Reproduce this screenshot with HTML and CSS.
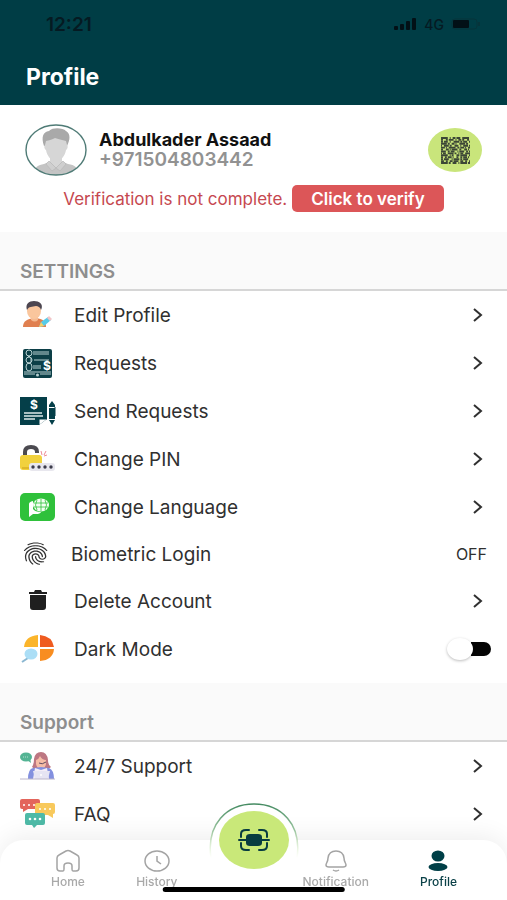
FILE: index.html
```html
<!DOCTYPE html>
<html lang="en">
<head>
<meta charset="utf-8">
<meta name="viewport" content="width=device-width, initial-scale=1">
<title>Profile</title>
<link rel="stylesheet" href="styles.css">
</head>
<body>
<header class="top">
  <div class="status">
    <span class="time">12:21</span>
    <div class="signals">
      <svg width="23" height="12" viewBox="0 0 23 12"><rect y="8" width="4" height="4" rx="1"/><rect x="6" y="6" width="4" height="6" rx="1"/><rect x="12" y="3" width="4" height="9" rx="1"/><rect x="18" width="4" height="12" rx="1"/></svg>
      <span class="network">4G</span>
      <svg width="30" height="12" viewBox="0 0 30 12"><rect x="1" y="1" width="25" height="10" rx="3" fill="none" stroke="#06343b"/><rect x="2" y="2" width="16" height="8" rx="1" /><path d="M28 4v4" stroke="#06343b" stroke-width="2"/></svg>
    </div>
  </div>
  <h1>Profile</h1>
</header>

<main>
  <section class="card">
    <div class="person">
      <svg class="avatar" viewBox="0 0 62 52" role="img" aria-label="Avatar">
        <defs><clipPath id="face"><ellipse cx="31" cy="26" rx="30" ry="25"/></clipPath></defs>
        <ellipse cx="31" cy="26" rx="30" ry="25" fill="#fff"/>
        <g clip-path="url(#face)">
          <path d="M8 52c1-9 5-11 11-12l7-3h10l7 3c7 1 11 4 12 12z" fill="#c4c4c4"/>
          <path d="M25 31v7l6 6 6-6v-7z" fill="#d6d6d6"/>
          <path d="M24 37l7 7-4 3-6-7zM38 37l-7 7 4 3 6-7z" fill="#cfcfcf" stroke="#b5b5b5" stroke-width=".6"/>
          <path d="M19 22C16 13 18 8 24 7c4-4 14-3 17 0 5 3 4 9 1 15z" fill="#a9a9a9"/>
          <path d="M21 17c5-1 7-2 9-3 3 1 7 2 11 3l1 4c1 0 1 4-1 5-1 6-5 11-10 11s-9-5-10-11c-2-1-2-5-1-5z" fill="#d6d6d6"/>
        </g>
        <ellipse cx="31" cy="26" rx="30" ry="25" fill="none" stroke="#4f7b76" stroke-width="1.4"/>
      </svg>
      <div class="identity">
        <h2>Abdulkader Assaad</h2>
        <p>+971504803442</p>
      </div>
      <button class="qr" type="button" aria-label="Show QR code">
        <svg width="31" height="27" viewBox="0 0 32 28" fill="none" stroke="#3c4636" stroke-width="2">
          <path d="M1 1h30" stroke-dasharray="7 2 1 2 3 1 4 2"/>
          <path d="M1 3h30" stroke-dasharray="2 3 2 1 5 2 1 2 3 1"/>
          <path d="M1 5h30" stroke-dasharray="2 1 4 2 1 3 6 1"/>
          <path d="M1 7h30" stroke-dasharray="6 1 2 2 3 1 1 3"/>
          <path d="M1 9h30" stroke-dasharray="1 2 5 1 2 3 4 2"/>
          <path d="M1 11h30" stroke-dasharray="4 1 1 2 7 2 2 1"/>
          <path d="M1 13h30" stroke-dasharray="2 3 3 1 1 1 6 2"/>
          <path d="M1 15h30" stroke-dasharray="5 2 2 1 4 3 1 1"/>
          <path d="M1 17h30" stroke-dasharray="1 1 3 2 6 1 2 2"/>
          <path d="M1 19h30" stroke-dasharray="7 2 1 1 2 3 3 1"/>
          <path d="M1 21h30" stroke-dasharray="2 2 2 1 4 1 1 3"/>
          <path d="M1 23h30" stroke-dasharray="2 1 5 3 1 1 6 1"/>
          <path d="M1 25h30" stroke-dasharray="3 2 2 2 3 1 5 2"/>
          <path d="M1 27h30" stroke-dasharray="7 1 2 2 4 2 1 1"/>
        </svg>
      </button>
    </div>
    <div class="verify">
      <p>Verification is not complete.</p>
      <button type="button">Click to verify</button>
    </div>
  </section>

  <h2 class="band">SETTINGS</h2>
  <ul class="list">
    <li><a class="row" href="#edit">
      <svg class="icon" viewBox="0 0 36 32"><path d="M3 28c0-6 4-8 11-9h2c7 1 10 3 10 9z" fill="#e08050"/><path d="M11 17h7v4q-3 3-7 0z" fill="#f5ba91"/><ellipse cx="14" cy="12" rx="7" ry="8" fill="#fac69d"/><path d="M7 11C5 5 9 2 14 2s10 3 7 9c-1-3-3-4-5-4-4 1-7 0-9 4z" fill="#4c4650"/><path d="M19 28l2-5 7-5 3 3-7 6z" fill="#56cbe8"/><path d="M19 28l2-5 3 4z" fill="#f8cf68"/><path d="M27 19l2-2 3 3-2 2z" fill="#f2c5c8"/></svg>
      <span class="name">Edit Profile</span><svg class="chevron" viewBox="0 0 12 16"><path d="M2 2l7 6-7 6"/></svg></a></li>
    <li><a class="row" href="#requests">
      <svg class="icon" viewBox="0 0 36 32"><rect x="3" y="2" width="29" height="29" rx="2" fill="#0c3f47"/><g fill="none" stroke="#b8d1d2"><circle cx="9" cy="6" r="3"/><circle cx="9" cy="13" r="3"/><ellipse cx="9" cy="20" rx="3" ry="4"/><path d="M13 5h16M13 7h16M14 13h15M13 19h8M13 21h8M4 25h27M4 27h11M20 27h11"/><path d="M7 11l2-2 2 2v4l-2 2-2-2"/></g><circle cx="17.500" cy="28" r="1.500" fill="#b8d1d2"/><text class="coin" x="23" y="23">$</text></svg>
      <span class="name">Requests</span><svg class="chevron" viewBox="0 0 12 16"><path d="M2 2l7 6-7 6"/></svg></a></li>
    <li><a class="row" href="#send">
      <svg class="icon" viewBox="0 0 36 32"><path d="M0 2h27v22l-8 6H0z" fill="#053f49"/><path d="M19 30v-6h8" fill="#fff" stroke="#053f49"/><path d="M4 18h18M4 21h19M4 24h11" stroke="#dce9e9" stroke-width="1.400"/><text class="coin" x="10" y="14">$</text><path d="M32 6l3 4v2h-6v-2zM29 13h6v11h-6zM29 25h6l-3 5z" fill="#053f49"/><path d="M35 12v9" stroke="#053f49"/></svg>
      <span class="name">Send Requests</span><svg class="chevron" viewBox="0 0 12 16"><path d="M2 2l7 6-7 6"/></svg></a></li>
    <li><a class="row" href="#pin">
      <svg class="icon" viewBox="0 0 36 32"><path d="M5 15V9q0-5 6-5t6 5v1" fill="none" stroke="#4b4a50" stroke-width="4"/><rect x="0" y="12" width="22" height="15" rx="3" fill="#f1d13d"/><path d="M2 25h18" stroke="#dfb729" stroke-width="2"/><rect x="9" y="20" width="26" height="8" rx="3" fill="#e8e7ee"/><g fill="#3d3c4b"><circle cx="13" cy="24" r="1.700"/><circle cx="19" cy="24" r="1.700"/><circle cx="25" cy="24" r="1.700"/><circle cx="31" cy="24" r="1.700"/></g><path d="M21 8l1 4M26 8l-2 4M27 12l-3 1" stroke="#ed8b94"/></svg>
      <span class="name">Change PIN</span><svg class="chevron" viewBox="0 0 12 16"><path d="M2 2l7 6-7 6"/></svg></a></li>
    <li><a class="row" href="#language">
      <svg class="icon" viewBox="0 0 36 32"><rect y="2" width="35" height="28" rx="5" fill="#2fc13b"/><path d="M9 13q0-2 4-3v8q2 3 8 3-1 2-5 2h-3l-4 3z" fill="#fff"/><ellipse cx="21" cy="14" rx="8" ry="6.500" fill="#f3fff2"/><path d="M21 8v12M14 12h14M14 16h14M17 9q-3 5 0 10M25 9q3 5 0 10M25 20l2 2" fill="none" stroke="#2fc13b" stroke-width=".8"/></svg>
      <span class="name">Change Language</span><svg class="chevron" viewBox="0 0 12 16"><path d="M2 2l7 6-7 6"/></svg></a></li>
    <li><button class="row biometric" type="button">
      <svg class="icon" viewBox="0 0 29 24" fill="#333"><path transform="scale(1.050 .9) translate(0 1)" d="M17.810 4.470c-.08 0-.16-.02-.23-.06C15.660 3.420 14 3 12.010 3c-1.980 0-3.860.47-5.570 1.410-.24.130-.54.040-.68-.2-.13-.24-.04-.55.2-.68C7.820 2.520 9.860 2 12.010 2c2.130 0 3.990.47 6.030 1.520.25.130.34.430.21.670-.09.180-.26.280-.44.280zM3.500 9.720c-.1 0-.2-.03-.29-.09-.23-.16-.28-.47-.12-.7.990-1.400 2.250-2.500 3.750-3.270C9.980 4.040 14 4.030 17.150 5.650c1.500.77 2.760 1.860 3.750 3.250.16.220.11.540-.12.700-.23.160-.54.110-.7-.12-.9-1.260-2.040-2.250-3.390-2.940-2.870-1.470-6.540-1.470-9.400.01-1.360.7-2.500 1.700-3.400 2.960-.08.140-.23.210-.39.210zm6.250 12.070c-.13 0-.26-.05-.35-.15-.87-.87-1.340-1.430-2.010-2.640-.69-1.230-1.050-2.730-1.050-4.340 0-2.970 2.540-5.390 5.660-5.390s5.660 2.420 5.660 5.390c0 .28-.22.5-.5.5s-.5-.22-.5-.5c0-2.420-2.090-4.390-4.660-4.390-2.570 0-4.660 1.970-4.660 4.390 0 1.440.32 2.770.93 3.850.64 1.150 1.080 1.640 1.850 2.420.19.200.19.510 0 .71-.11.100-.24.150-.37.150zm7.170-1.850c-1.190 0-2.240-.3-3.100-.89-1.490-1.010-2.380-2.650-2.380-4.390 0-.28.22-.5.5-.5s.5.220.5.500c0 1.410.72 2.740 1.940 3.560.71.480 1.540.71 2.540.71.240 0 .64-.03 1.040-.1.270-.05.53.130.58.410.05.270-.13.530-.41.580-.57.110-1.070.12-1.210.12zM14.910 22c-.04 0-.09-.01-.13-.02-1.590-.44-2.630-1.030-3.720-2.100-1.400-1.390-2.170-3.240-2.170-5.220 0-1.620 1.380-2.940 3.080-2.940s3.080 1.320 3.080 2.940c0 1.070.93 1.940 2.080 1.940s2.080-.87 2.080-1.940c0-3.770-3.250-6.830-7.250-6.830-2.840 0-5.440 1.580-6.610 4.030-.39.810-.59 1.760-.59 2.800 0 .78.070 2.010.67 3.610.1.260-.03.550-.29.640-.26.100-.55-.04-.64-.29-.49-1.310-.73-2.610-.73-3.960 0-1.200.23-2.290.68-3.240 1.330-2.790 4.280-4.600 7.510-4.600 4.550 0 8.250 3.510 8.250 7.830 0 1.620-1.380 2.940-3.080 2.940s-3.080-1.320-3.080-2.940c0-1.070-.93-1.940-2.080-1.940s-2.080.87-2.080 1.940c0 1.710.66 3.310 1.870 4.510.95.940 1.860 1.460 3.270 1.850.27.070.42.350.35.610-.05.230-.26.380-.47.380z"/></svg>
      <span class="name">Biometric Login</span><span class="state">OFF</span></button></li>
    <li><a class="row" href="#delete">
      <svg class="icon" viewBox="0 0 36 32" fill="#1f1f1f"><path d="M9 7h5l1-2h6l1 2h5v2H9zM10 10h16v12q0 3-3 3H13q-3 0-3-3z"/></svg>
      <span class="name">Delete Account</span><svg class="chevron" viewBox="0 0 12 16"><path d="M2 2l7 6-7 6"/></svg></a></li>
    <li><label class="row">
      <svg class="icon" viewBox="0 0 36 32"><path d="M18 2v12H4Q5 3 18 2z" fill="#fbb52b"/><path d="M20 2q12 1 14 12H20z" fill="#ef5b20"/><path d="M20 16h14q-1 11-14 12z" fill="#f88d20"/><path d="M8 25l-6 4" stroke="#8bb7d1" stroke-width="2"/><ellipse cx="11" cy="21" rx="6.500" ry="5.500" fill="#abdef6"/></svg>
      <span class="name">Dark Mode</span><input class="switch" type="checkbox" role="switch"></label></li>
  </ul>

  <h2 class="band">Support</h2>
  <ul class="list">
    <li><a class="row" href="#support">
      <svg class="icon" viewBox="0 0 36 32"><ellipse cx="6" cy="7" rx="6" ry="4.500" fill="#54b494"/><path d="M7 10l4 3-1-5z" fill="#54b494"/><path d="M3 7h6" stroke="#b7dfcf" stroke-dasharray="1 1"/><path d="M12 17q2-3 2-8 1-7 7-7t7 8q0 5 3 7l-4 3H16z" fill="#bd7782"/><path d="M16 10q3-1 4-4 2 4 6 4v4q-1 5-5 5t-5-5z" fill="#f6bda6"/><path d="M19 13q3 2 7-1" fill="none" stroke="#614b60"/><path d="M8 29q0-10 5-11l8-1 8 1q5 2 5 11z" fill="#8390df"/><path d="M15 18l6 2 6-2 2 11H13z" fill="#f4eef8"/><path d="M13 21h17l-2 8H15z" fill="#e6e4f3"/><circle cx="21" cy="25" r="1" fill="#fff"/><path d="M0 29h35" stroke="#bcb6ca"/></svg>
      <span class="name">24/7 Support</span><svg class="chevron" viewBox="0 0 12 16"><path d="M2 2l7 6-7 6"/></svg></a></li>
    <li><a class="row" href="#faq">
      <svg class="icon" viewBox="0 0 36 32"><path d="M2 1h16q2 0 2 2v8H8l-5 3v-3H2q-2 0-2-2V3q0-2 2-2z" fill="#e3655b"/><path d="M17 5h16q2 0 2 2v7q0 2-2 2v4l-5-3H15V7q0-2 2-2z" fill="#f8c95c"/><path d="M7 15h16q2 0 2 2v8q0 2-2 2h-6l-3 3-2-3H7q-2 0-2-2v-8q0-2 2-2z" fill="#4ebaa7"/><g fill="#fff"><circle cx="4" cy="7" r="1"/><circle cx="9" cy="7" r="1"/><circle cx="14" cy="7" r="1"/><circle cx="20" cy="11" r="1"/><circle cx="25" cy="11" r="1"/><circle cx="30" cy="11" r="1"/><circle cx="10" cy="21" r="1.300"/><circle cx="15" cy="21" r="1.300"/><circle cx="20" cy="21" r="1.300"/></g></svg>
      <span class="name">FAQ</span><svg class="chevron" viewBox="0 0 12 16"><path d="M2 2l7 6-7 6"/></svg></a></li>
  </ul>
</main>

<nav class="tabs" aria-label="Main">
  <div class="side left">
    <a href="#home"><svg viewBox="0 0 26 24"><path d="M2 9Q2 7 4 6l7-4q2-1 4 0l7 4q2 1 2 3v10q0 3-3 3h-3q-1 0-1-2v-3q0-3-4-3t-4 3v3q0 2-1 2H5q-3 0-3-3z"/></svg><span>Home</span></a>
    <a href="#history"><svg viewBox="0 0 26 24"><ellipse cx="13" cy="12" rx="12" ry="10"/><path d="M13 7v5l4 3"/></svg><span>History</span></a>
  </div>
  <button class="scan" type="button" aria-label="Scan">
    <svg width="32" height="24" viewBox="0 0 32 24" fill="none" stroke="#083c40" stroke-width="2" stroke-linecap="round"><path d="M3 9V6q0-4 5-4h3M21 2h3q5 0 5 4v3M3 15v3q0 4 5 4h3M21 22h3q5 0 5-4v-3"/><path d="M9 10V9q0-2 3-2h8q3 0 3 2v1zM9 14v1q0 2 3 2h8q3 0 3-2v-1z" fill="#083c40"/><path d="M1 12h30"/></svg>
  </button>
  <svg class="ring" viewBox="0 0 90 64" fill="none" aria-hidden="true"><defs><linearGradient id="fade" x1="0" y1="0" x2="0" y2="1"><stop offset="0" stop-color="#458b62"/><stop offset=".5" stop-color="#9bc5a0"/><stop offset="1" stop-color="#d7f1b5" stop-opacity="0"/></linearGradient></defs><path d="M2 56C-3 22 18 2 45 2s48 20 43 54" stroke="url(#fade)" stroke-width="1.500"/></svg>
  <div class="side right">
    <a href="#notification"><svg viewBox="0 0 26 24"><path d="M5 9q1-7 8-7t8 7c0 4 2 5 2 7q0 2-3 2H6q-3 0-3-2c0-2 2-3 2-7zM10 21q3 2 6 0"/></svg><span>Notification</span></a>
    <a class="current" href="#profile" aria-current="page"><svg viewBox="0 0 26 24"><ellipse cx="13" cy="7" rx="6.500" ry="5.500"/><ellipse cx="13" cy="18" rx="9.500" ry="4"/></svg><span>Profile</span></a>
  </div>
  <div class="indicator"></div>
</nav>
</body>
</html>
```
FILE: styles.css
```css
* {
  box-sizing: border-box;
}

body,
h1,
h2,
p,
ul {
  margin: 0;
}

body {
  background: #fff;
  color: #303030;
  font-family: Inter, "Liberation Sans", sans-serif;
}

button {
  border: 0;
  font-family: inherit;
}

.top {
  background: #003d45;
  padding: 12px 26px 14px;
}

.status {
  display: flex;
  align-items: center;
  justify-content: space-between;
  height: 24px;
  padding-left: 20px;
  color: #051a22;
}

.time {
  font-size: 19px;
  font-weight: 600;
}

.signals {
  display: flex;
  align-items: center;
  gap: 7px;
  fill: #021016;
}

.network {
  font-size: 14px;
  font-weight: 500;
}

.top h1 {
  margin-top: 27px;
  color: #fff;
  font-size: 23px;
  font-weight: 700;
  line-height: 28px;
}

.card {
  height: 127px;
  padding: 19px 25px 0;
}

.person {
  display: flex;
  align-items: center;
}

.avatar {
  width: 62px;
  height: 52px;
  flex: none;
}

.identity {
  flex: 1;
  padding-left: 12px;
}

.identity h2 {
  color: #111;
  font-size: 18px;
  font-weight: 700;
  line-height: 20px;
}

.identity p {
  color: #929292;
  font-size: 19px;
  font-weight: 600;
  line-height: 20px;
}

.qr {
  display: grid;
  place-items: center;
  width: 54px;
  height: 44px;
  padding: 0;
  border-radius: 50%;
  background: #c9e57b;
}

.verify {
  display: flex;
  align-items: center;
  justify-content: center;
  gap: 5px;
  margin-top: 9px;
  color: #c64850;
  font-size: 17px;
}

.verify button {
  height: 27px;
  padding: 0 19px;
  border-radius: 5px;
  background: #dc5658;
  color: #fff;
  font-size: 17px;
  font-weight: 600;
}

.band {
  height: 59px;
  padding: 28px 20px 0;
  border-bottom: 2px solid #d6d6d6;
  background: #fafafa;
  color: #8e8e8e;
  font-size: 19px;
  font-weight: 600;
  line-height: 24px;
}

.list {
  padding: 0 0 10px;
  list-style: none;
}

.row {
  display: flex;
  align-items: center;
  width: 100%;
  height: 48px;
  padding: 0 20px;
  background: none;
  color: #303030;
  font-size: 19px;
  text-align: left;
  text-decoration: none;
}

.biometric {
  height: 46px;
}

.icon {
  width: 36px;
  height: 32px;
  flex: none;
}

.name {
  flex: 1;
  padding-left: 18px;
}

.biometric .name {
  padding-left: 15px;
}

.coin {
  fill: #fff;
  font-size: 12px;
  font-weight: 700;
}

.chevron {
  width: 12px;
  height: 16px;
  margin-right: 3px;
  fill: none;
  stroke: #303030;
  stroke-width: 2;
}

.state {
  font-size: 16px;
}

.switch {
  appearance: none;
  display: flex;
  align-items: center;
  width: 40px;
  height: 14px;
  margin: 0 -4px 0 0;
  border-radius: 8px;
  background: linear-gradient(90deg, transparent 50%, #050505 50%);
}

.switch::before {
  content: "";
  width: 26px;
  height: 22px;
  flex: none;
  margin-left: -4px;
  border-radius: 50%;
  background: #fff;
  box-shadow: 0 1px 3px #0004;
}

.switch:checked {
  justify-content: flex-end;
  background: #050505;
}

.tabs {
  position: fixed;
  right: 0;
  bottom: 0;
  left: 0;
  display: grid;
  grid-template-columns: 1fr 70px 1fr;
  height: 60px;
  border-radius: 24px 24px 0 0;
  background: #fff;
  box-shadow: 0 -4px 24px #00000012;
}

.side {
  display: flex;
  justify-content: space-between;
  padding-top: 9px;
}

.left {
  padding-right: 41px;
  padding-left: 51px;
}

.right {
  padding-right: 50px;
  padding-left: 14px;
}

.side a {
  display: flex;
  flex-direction: column;
  align-items: center;
  color: #a9a9a9;
  font-size: 12px;
  font-weight: 500;
  line-height: 18px;
  text-decoration: none;
}

.side svg {
  width: 26px;
  height: 24px;
  fill: none;
  stroke: #a4a4a4;
  stroke-width: 1.5;
}

.side .current {
  color: #0b4148;
}

.side .current svg {
  fill: #003f47;
  stroke: none;
}

.scan {
  display: grid;
  place-items: center;
  width: 70px;
  height: 58px;
  margin-top: -29px;
  padding: 0;
  border-radius: 50%;
  background: #c9e879;
  box-shadow: 0 0 0 7px #fff;
}

.ring {
  position: absolute;
  top: -38px;
  left: calc(50% - 45px);
  width: 90px;
  height: 64px;
  pointer-events: none;
}

.indicator {
  position: absolute;
  bottom: 8px;
  left: 50%;
  width: 36%;
  height: 5px;
  border-radius: 3px;
  background: #000;
  transform: translateX(-50%);
}
```
